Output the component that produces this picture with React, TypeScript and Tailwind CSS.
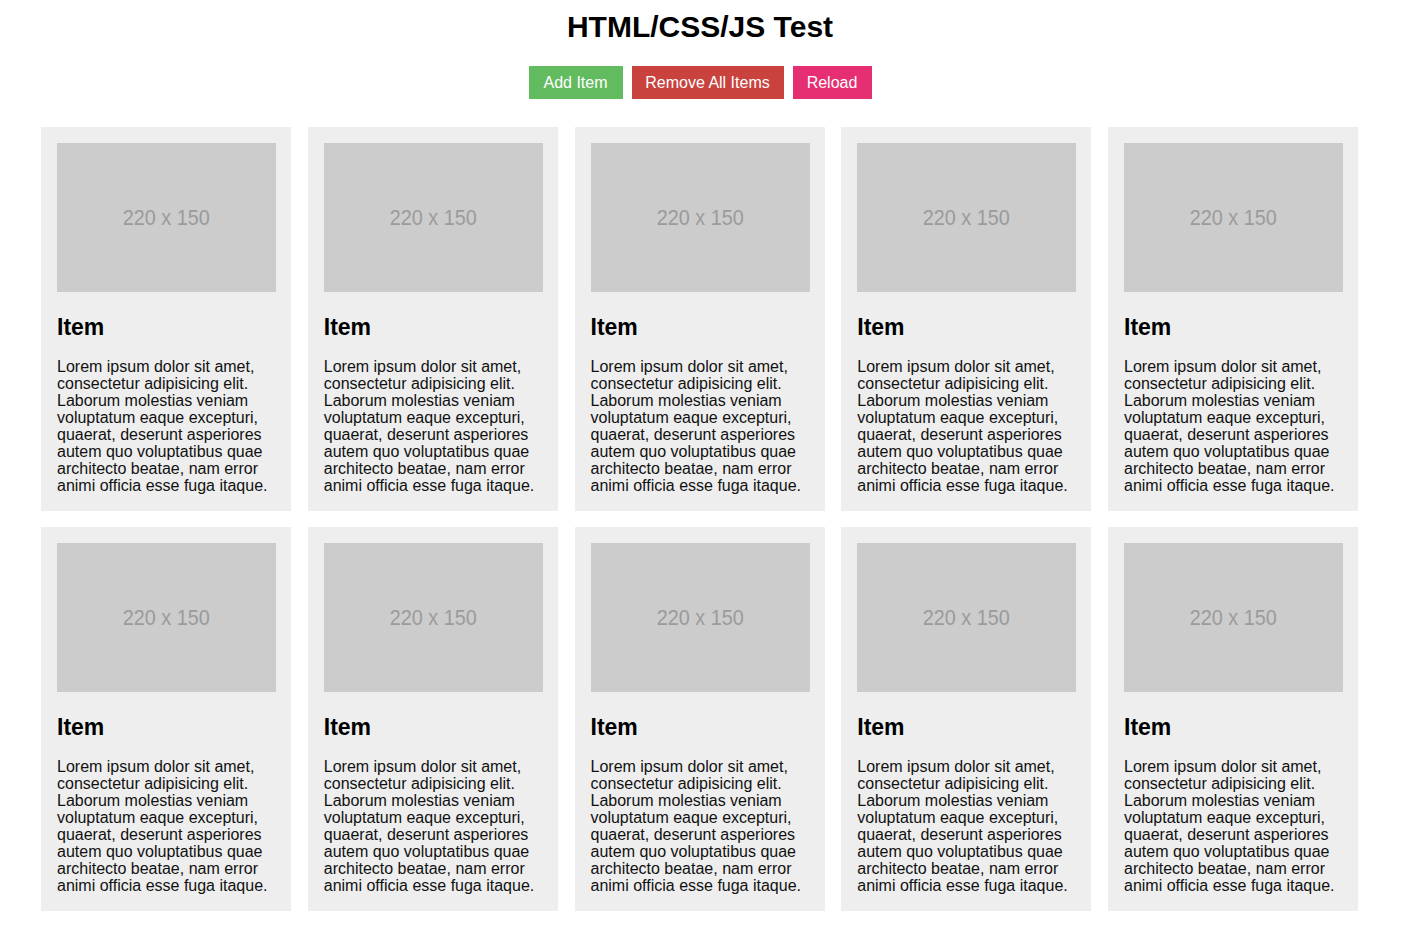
const LOREM =
  'Lorem ipsum dolor sit amet, consectetur adipisicing elit. Laborum molestias veniam voluptatum eaque excepturi, quaerat, deserunt asperiores autem quo voluptatibus quae architecto beatae, nam error animi officia esse fuga itaque.';

function Card() {
  return (
    <div className="bg-[#eeeeee] pt-4 px-4 pb-[17px]">
      <div className="w-[219px] h-[149px] bg-[#cccccc] flex items-center justify-center">
        <span className="text-[22px] text-[#9b9b9b] scale-x-90">220 x 150</span>
      </div>
      <h2 className="mt-[23px] text-[23px] font-bold leading-[25px] text-black">Item</h2>
      <p className="mt-[18px] text-[16px] leading-[17px] text-[#111]">{LOREM}</p>
    </div>
  );
}

export default function App() {
  const items = Array.from({ length: 10 }, (_, i) => i);

  return (
    <div className="min-h-screen bg-white" style={{ fontFamily: '"Liberation Sans", Arial, sans-serif' }}>
      <div className="w-[1400px] pb-10">
        <h1 className="pt-[10px] text-[30px] font-bold leading-[34px] text-center text-black">
          HTML/CSS/JS Test
        </h1>

        <div className="mt-[22px] flex justify-center gap-[9px]">
          <button className="h-[33px] w-[94px] bg-[#62bb5e] text-white text-[16px]">Add Item</button>
          <button className="h-[33px] w-[152px] bg-[#c9423e] text-white text-[16px]">Remove All Items</button>
          <button className="h-[33px] w-[79px] bg-[#e52f72] text-white text-[16px]">Reload</button>
        </div>

        <div className="mt-7 ml-[41px] w-[1317px] grid grid-cols-5 gap-x-[16.75px] gap-y-4">
          {items.map((i) => (
            <Card key={i} />
          ))}
        </div>
      </div>
    </div>
  );
}
